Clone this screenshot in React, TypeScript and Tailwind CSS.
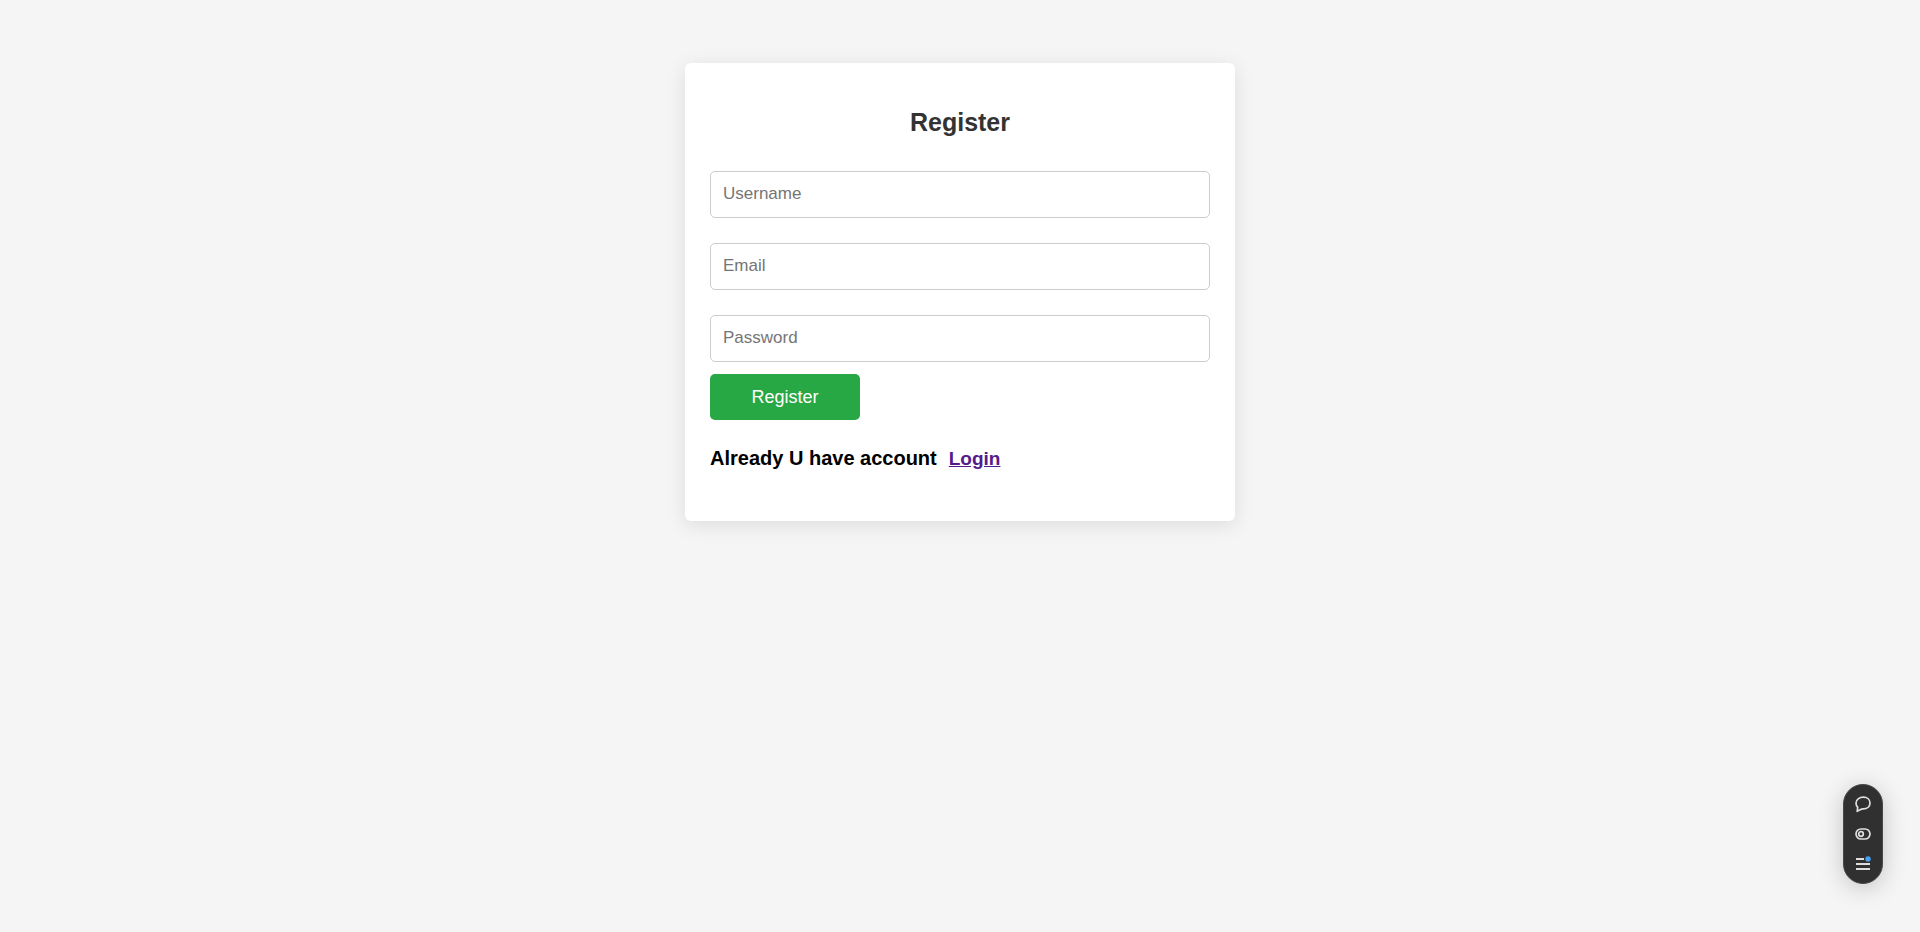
const fields = [
  { id: "username", label: "Username", type: "text" },
  { id: "email", label: "Email", type: "email" },
  { id: "password", label: "Password", type: "password" },
];

function FloatingToolbar() {
  return (
    <div
      role="toolbar"
      aria-label="Page tools"
      className="fixed right-[37px] bottom-12 flex h-[100px] w-10 flex-col items-center justify-between rounded-full border border-[#484848] bg-[#303030] py-[9px] text-[#dedede] shadow-[0_4px_24px_rgba(0,0,0,0.2)]"
    >
      <button type="button" aria-label="Comment" className="size-5">
        <svg viewBox="0 0 20 20" className="size-5" fill="none" stroke="currentColor" strokeWidth="1.7" strokeLinejoin="round">
          <path d="M10.4 3.2C14.3 3.200 17 5.600 17 9s-2.700 5.800-6.600 5.800c-1.700 0-2.800.6-3.800 1.300L4.200 17.300l.5-3.900C3.500 12.200 3 10.700 3 9c0-3.400 3.300-5.800 7.400-5.800Z" />
        </svg>
      </button>
      <button type="button" aria-label="Toggle" className="size-5">
        <svg viewBox="0 0 20 20" className="size-5" fill="none" stroke="currentColor" strokeWidth="1.7">
          <rect x="3" y="5" width="14" height="10" rx="5" />
          <circle cx="8" cy="10" r="2.300" />
        </svg>
      </button>
      <button type="button" aria-label="Menu" className="size-5">
        <svg viewBox="0 0 20 20" className="size-5" fill="none" stroke="currentColor" strokeWidth="2">
          <path d="M3 5h8M3 10h14M3 15h14" />
          <circle cx="15" cy="5" r="2.700" fill="#46a0f5" stroke="none" />
        </svg>
      </button>
    </div>
  );
}

export default function App() {
  return (
    <div className="min-h-screen bg-[#f5f5f5] px-4 py-[63px] font-['Liberation_Sans',Arial,sans-serif]">
      <main className="mx-auto w-full max-w-[550px] rounded-md bg-white px-[25px] pt-[45px] pb-12 shadow-[0_4px_20px_rgba(0,0,0,0.1)]">
        <h1 className="text-center text-[25px] leading-7 font-bold text-[#333]">Register</h1>
        <form className="mt-[35px]" onSubmit={(e) => e.preventDefault()}>
          <div className="flex flex-col gap-[25px]">
            {fields.map((f) => (
              <input
                key={f.id}
                id={f.id}
                name={f.id}
                type={f.type}
                aria-label={f.label}
                placeholder={f.label}
                className="h-[47px] w-full rounded-[5px] border border-[#ccc] bg-white px-3 pb-0.5 text-[17px] text-black placeholder:text-[#757575]"
              />
            ))}
          </div>
          <button type="submit" className="mt-3 block h-[46px] w-[150px] rounded-[5px] bg-[#28a745] text-lg text-white">
            Register
          </button>
        </form>
        <p className="mt-6 flex items-baseline gap-3 text-xl leading-7 font-bold text-black">
          Already U have account
          <a href="#login" className="text-[19px] text-[#551a8b] underline">
            Login
          </a>
        </p>
      </main>
      <FloatingToolbar />
    </div>
  );
}
